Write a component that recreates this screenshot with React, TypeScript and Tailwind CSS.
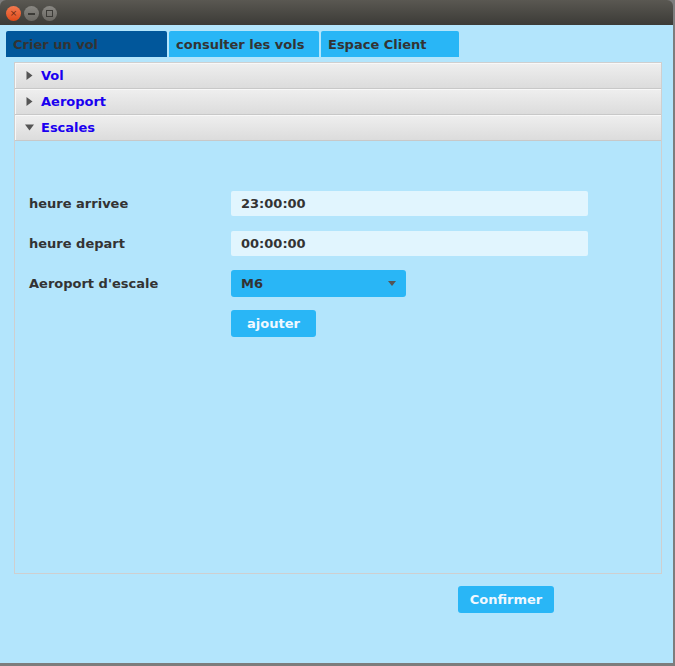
import { useState } from "react";

const font = { fontFamily: '"DejaVu Sans", "Liberation Sans", sans-serif' };

function TitleBar() {
	return (
		<div className="flex h-[25px] items-center gap-[3px] rounded-t-[6px] bg-gradient-to-b from-[#5a5852] to-[#3c3b37] pl-[6px] pt-[2px]">
			<div className="flex h-[15px] w-[15px] items-center justify-center rounded-full bg-gradient-to-b from-[#f37a4f] to-[#df4a16] text-[9px] leading-none text-[#6b2a12]">
				×
			</div>
			<div className="flex h-[15px] w-[15px] items-center justify-center rounded-full bg-gradient-to-b from-[#8a8883] to-[#6a6863]">
				<div className="h-[2px] w-[7px] bg-[#3c3b37]" />
			</div>
			<div className="flex h-[15px] w-[15px] items-center justify-center rounded-full bg-gradient-to-b from-[#8a8883] to-[#6a6863]">
				<div className="h-[7px] w-[7px] border border-[#3c3b37]" />
			</div>
		</div>
	);
}

function Tabs() {
	const tabs = [
		{ label: "Crier un vol", w: "w-[161px]", active: true },
		{ label: "consulter les vols", w: "w-[150px]", active: false },
		{ label: "Espace Client", w: "w-[138px]", active: false },
	];
	return (
		<div className="flex gap-[2px] pl-[6px] pt-[6px]">
			{tabs.map((t) => (
				<div
					key={t.label}
					className={`flex h-[26px] items-center rounded-t-[2px] pl-[7px] pt-[2px] text-[13px] font-bold text-[#333] ${t.w} ${
						t.active ? "bg-[#01579b]" : "bg-[#29b6f6]"
					}`}
				>
					{t.label}
				</div>
			))}
		</div>
	);
}

function AccordionHeader({ label, open }: { label: string; open?: boolean }) {
	return (
		<div className="flex h-[26px] items-center gap-[7px] border-b border-[#c8c8c8] bg-gradient-to-b from-[#efefef] to-[#dcdcdc] pl-[10px] shadow-[inset_1px_1px_0_#f8f8f8]">
			{open ? (
				<svg width="9" height="9" viewBox="0 0 9 9">
					<path d="M0 1.5 L9 1.5 L4.5 7.5 Z" fill="#555" />
				</svg>
			) : (
				<svg width="9" height="9" viewBox="0 0 9 9">
					<path d="M1.5 0 L7.5 4.5 L1.5 9 Z" fill="#555" />
				</svg>
			)}
			<span className="text-[13px] font-bold text-[#1a00f0]">{label}</span>
		</div>
	);
}

function Field({ label, value }: { label: string; value: string }) {
	return (
		<div className="flex items-center">
			<span className="w-[202px] text-[13px] font-bold text-[#333]">{label}</span>
			<div className="flex h-[25px] w-[357px] items-center rounded-[2px] bg-[#e1f5fe] pl-[10px] text-[13px] font-bold text-[#333]">
				{value}
			</div>
		</div>
	);
}

export default function App() {
	const [airport] = useState("M6");

	return (
		<div className="relative h-[666px] w-[675px] overflow-hidden bg-[#7d7d7d]" style={font}>
			<div className="flex h-[663px] w-[673px] flex-col">
				<TitleBar />
				<div className="flex flex-1 flex-col bg-[#b3e5fc]">
					<Tabs />
					<div className="ml-[14px] mt-[5px] flex h-[512px] w-[648px] flex-col border border-[#cfcfcf]">
						<AccordionHeader label="Vol" />
						<AccordionHeader label="Aeroport" />
						<AccordionHeader label="Escales" open />
						<div className="flex flex-col pl-[14px] pt-[50px]">
							<Field label="heure arrivee" value="23:00:00" />
							<div className="mt-[15px]">
								<Field label="heure depart" value="00:00:00" />
							</div>
							<div className="mt-[14px] flex items-center">
								<span className="w-[202px] text-[13px] font-bold text-[#333]">Aeroport d'escale</span>
								<div className="flex h-[27px] w-[175px] items-center justify-between rounded-[3px] bg-[#29b6f6] pl-[10px] pr-[10px] text-[13px] font-bold text-[#333]">
									{airport}
									<svg width="8" height="5" viewBox="0 0 8 5">
										<path d="M0 0 L8 0 L4 5 Z" fill="#555" />
									</svg>
								</div>
							</div>
							<div className="mt-[13px] pl-[202px]">
								<button className="flex h-[27px] w-[85px] items-center justify-center rounded-[3px] bg-[#29b6f6] text-[13px] font-bold text-[#f0f8ff]">
									ajouter
								</button>
							</div>
						</div>
					</div>
					<div className="pl-[458px] pt-[12px]">
						<button className="flex h-[27px] w-[96px] items-center justify-center rounded-[3px] bg-[#29b6f6] text-[13px] font-bold text-[#f0f8ff]">
							Confirmer
						</button>
					</div>
				</div>
			</div>
		</div>
	);
}
